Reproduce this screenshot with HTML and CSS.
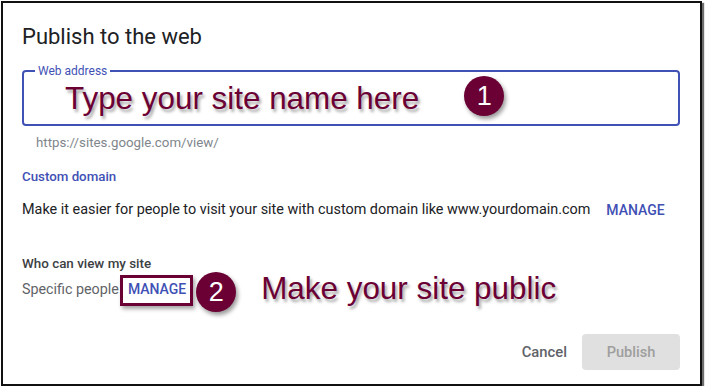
FILE: index.html
```html
<!DOCTYPE html>
<html>
<head>
<meta charset="utf-8">
<link rel="stylesheet" href="styles.css">
</head>
<body>
<div class="frame">
  <h1 class="title">Publish to the web</h1>
  <div class="field">
    <span class="field-label">Web address</span>
    <div class="field-row">
      <span class="callout callout-a">Type your site name here</span>
      <span class="badge badge-a">1</span>
    </div>
  </div>
  <div class="helper">https://sites.google.com/view/</div>
  <div class="section-title">Custom domain</div>
  <div class="domain-row">
    <span class="body-text">Make it easier for people to visit your site with custom domain like www.yourdomain.com</span>
    <span class="link">MANAGE</span>
  </div>
  <div class="sub-title">Who can view my site</div>
  <div class="view-row">
    <span class="muted">Specific people</span>
    <span class="boxed link">MANAGE</span>
    <span class="badge badge-b">2</span>
    <span class="callout callout-b">Make your site public</span>
  </div>
  <div class="actions">
    <span class="btn-cancel">Cancel</span>
    <span class="btn-publish">Publish</span>
  </div>
</div>
</body>
</html>
```

FILE: styles.css
```css
html, body {
  margin: 0;
  padding: 0;
  background: #fff;
}
body {
  font-family: Roboto, "Liberation Sans", Arial, sans-serif;
  color: #202124;
}
.frame {
  box-sizing: border-box;
  margin: 1px 0 0 1px;
  width: 701px;
  height: 385px;
  border: 2px solid #111;
  box-shadow: 2px 2px 1px #6e6e6e;
  padding: 20px 20px 0 19px;
  display: flex;
  flex-direction: column;
}
.title {
  margin: 0;
  font-size: 22px;
  font-weight: 400;
  line-height: 28px;
  color: #202124;
}
.field {
  position: relative;
  margin-top: 19px;
  height: 56px;
  box-sizing: border-box;
  border: 2px solid #3f51b5;
  border-radius: 4px;
  padding-left: 41px;
}
.field-label {
  position: absolute;
  left: 11px;
  top: -9px;
  background: #fff;
  padding: 0 3px;
  font-size: 12px;
  line-height: 16px;
  color: #3f51b5;
}
.field-row {
  display: flex;
  align-items: flex-start;
}
.callout {
  font-family: "Liberation Sans", Arial, sans-serif;
  font-size: 31.4px;
  line-height: 34px;
  color: #6b0034;
  text-shadow: 2px 3px 3px rgba(0, 0, 0, 0.35);
  white-space: nowrap;
}
.callout-a {
  margin-top: 10px;
}
.badge {
  width: 40px;
  height: 40px;
  border-radius: 50%;
  background: #6b0034;
  color: #fff;
  font-family: "Liberation Sans", Arial, sans-serif;
  font-size: 27px;
  display: flex;
  align-items: center;
  justify-content: center;
  box-shadow: 2px 3px 4px rgba(0, 0, 0, 0.4);
  flex: none;
}
.badge-a {
  margin-top: 4px;
  margin-left: 45px;
}
.helper {
  margin-top: 9px;
  margin-left: 14px;
  font-size: 13.3px;
  line-height: 16px;
  color: #80868b;
}
.section-title {
  margin-top: 18px;
  font-size: 13.3px;
  font-weight: 500;
  line-height: 16px;
  color: #3f51b5;
}
.domain-row {
  margin-top: 15px;
  display: flex;
  font-size: 14.4px;
  line-height: 20px;
}
.body-text {
  color: #202124;
}
.link {
  color: #3f51b5;
  font-weight: 500;
  font-size: 14px;
}
.domain-row .link {
  margin-left: 16px;
}
.sub-title {
  margin-top: 36px;
  font-size: 13.4px;
  font-weight: 500;
  line-height: 16px;
  color: #3c4043;
}
.view-row {
  display: flex;
  align-items: flex-start;
  font-size: 14.3px;
  line-height: 20px;
}
.muted {
  color: #5f6368;
  margin-top: 7px;
}
.boxed {
  margin-top: 3px;
  margin-left: 1px;
  border: 3px solid #6b0034;
  padding: 1px 4px 4px 5px;
  box-shadow: 2px 3px 4px rgba(0, 0, 0, 0.35);
}
.badge-b {
  margin-left: 3px;
}
.callout-b {
  margin-left: 25px;
}
.actions {
  margin-top: 22px;
  display: flex;
  justify-content: flex-end;
  align-items: center;
  gap: 15px;
  font-weight: 500;
  font-size: 14.8px;
}
.btn-cancel {
  color: #5f6368;
}
.btn-publish {
  width: 98px;
  height: 36px;
  border-radius: 4px;
  background: #e0e0e0;
  color: #9e9e9e;
  font-size: 14.6px;
  display: flex;
  align-items: center;
  justify-content: center;
}
```
